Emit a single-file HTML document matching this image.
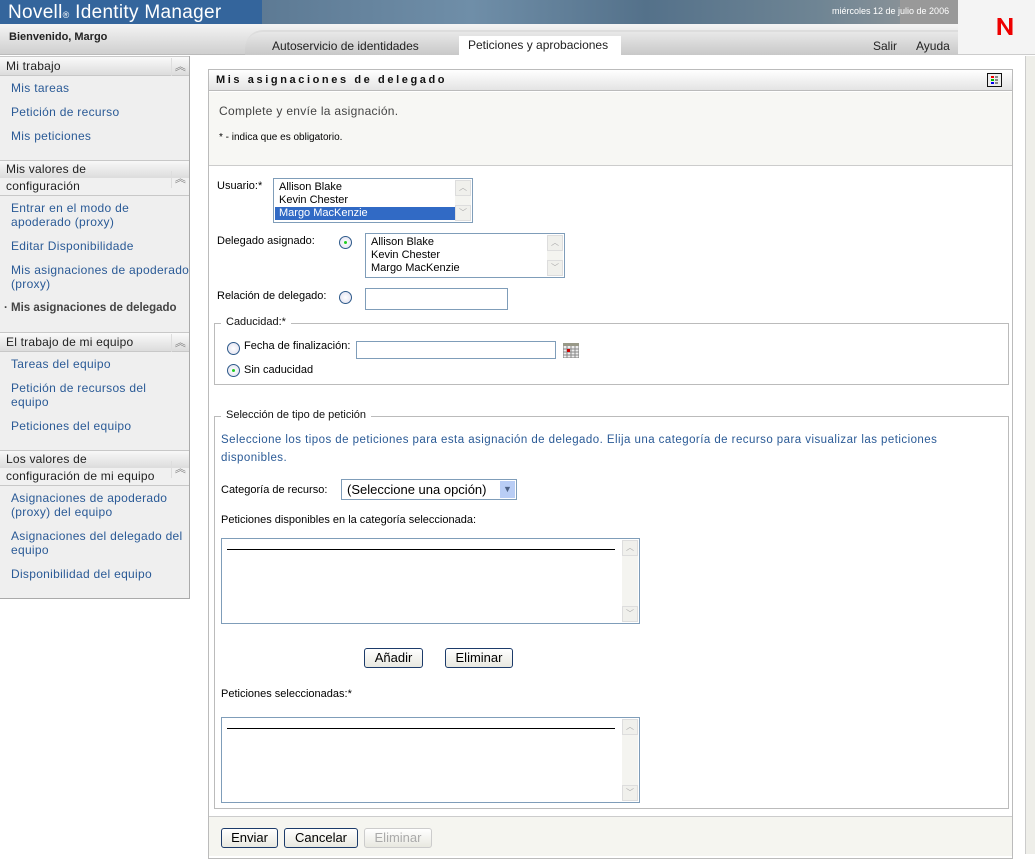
<!DOCTYPE html>
<html><head><meta charset="utf-8"><style>
*{box-sizing:border-box;margin:0;padding:0}
body{width:1035px;height:854px;position:relative;overflow:hidden;background:#fff;font-family:"Liberation Sans",sans-serif;font-size:12px;color:#000}
.a{position:absolute}
.lnk{color:#2a5a96;font-size:12px;letter-spacing:.3px}
.hdr{background:linear-gradient(#fafafa,#dcdcdc);border-top:1px solid #c8c8c8;border-bottom:1px solid #c8c8c8;color:#222;font-size:12px;padding-left:6px;letter-spacing:.2px}
.chev{position:absolute;right:0;width:18px;color:#777;font-size:11px;text-align:center;border-left:1px solid #ddd}
.box{border:1px solid #7f9db9;background:#fff}
.sb{position:absolute;right:1px;top:1px;bottom:1px;width:16px;background:#f4f4f0}
.sb i{position:absolute;left:0;width:16px;height:16px;border:1px solid #ddd;background:#f0f0ec;font-style:normal;font-size:8px;color:#aaa;text-align:center;line-height:14px}
.radio{width:13px;height:13px;border-radius:50%;border:1px solid #2e5a8a;background:radial-gradient(#fff,#dde);}
.radio.on::after{content:"";position:absolute;left:4px;top:4px;width:3px;height:3px;border-radius:50%;background:#2c2}
.btn{border:1px solid #1c3b6a;border-radius:3px;background:linear-gradient(#fff,#e8e8e0);font-size:13px;text-align:center;line-height:18px;height:20px}
.fs{border:1px solid #bbb}
.leg{background:#fff;padding:0 5px;font-size:11px;color:#111}
</style></head><body>
<div class="a" style="left:0;top:0;width:262px;height:24px;background:#34659c"></div>
<div class="a" style="left:262px;top:0;width:698px;height:24px;background:linear-gradient(90deg,#5d7a94,#6f8ea8 30%,#54718a 55%,#6f8594 80%,#9a9a9a)"></div>
<div class="a" style="left:900px;top:0;width:58px;height:24px;background:#999"></div>
<div class="a" style="left:8px;top:2px;color:#fff;font-size:19px;letter-spacing:.3px">Novell<span style="font-size:9px">®</span> Identity Manager</div>
<div class="a" style="left:832px;top:6px;color:#fff;font-size:9px">miércoles 12 de julio de 2006</div>
<div class="a" style="left:958px;top:0;width:77px;height:55px;background:#f4f4f4;border-bottom:1px solid #ccc"></div>
<svg class="a" style="left:996px;top:17px" width="18" height="19"><path d="M1.5 18V1H5L13 13V1H16.5V18H13L5 6V18Z" fill="#e00"/></svg>
<div class="a" style="left:0;top:24px;width:958px;height:31px;background:linear-gradient(#f4f4f4,#cfcfcf);border-bottom:1px solid #bbb"></div>
<div class="a" style="left:245px;top:30px;width:713px;height:25px;background:linear-gradient(#e8e8e8,#c8c8c8);border-top:2px solid #ddd;border-radius:18px 0 0 0"></div>
<div class="a" style="left:9px;top:31px;font-weight:bold;font-size:11px;color:#222">Bienvenido, Margo</div>
<div class="a" style="left:272px;top:39px;font-size:12px;color:#222">Autoservicio de identidades</div>
<div class="a" style="left:459px;top:36px;width:162px;height:20px;background:#fff"></div>
<div class="a" style="left:468px;top:38px;font-size:12px;color:#222">Peticiones y aprobaciones</div>
<div class="a" style="left:873px;top:39px;font-size:12px;color:#222">Salir</div>
<div class="a" style="left:916px;top:39px;font-size:12px;color:#222">Ayuda</div>
<div class="a" style="left:1025px;top:56px;width:10px;height:798px;background:#eeeee9;border-left:1px solid #ccc"></div>
<div class="a" style="left:0;top:56px;width:190px;height:543px;background:#efefef;border-right:1px solid #aaa;border-bottom:1px solid #aaa"></div>
<div class="a hdr" style="left:0;top:56px;width:189px;height:20px;line-height:18px">Mi trabajo<span class="chev" style="top:1px">︽</span></div>
<div class="a lnk" style="left:11px;top:81px">Mis tareas</div>
<div class="a lnk" style="left:11px;top:105px">Petición de recurso</div>
<div class="a lnk" style="left:11px;top:129px">Mis peticiones</div>
<div class="a hdr" style="left:0;top:160px;width:189px;height:36px;line-height:17px;background:linear-gradient(#f8f8f8,#dcdcdc 50%,#f0f0f0 50%)">Mis valores de<br>configuración<span class="chev" style="top:10px">︽</span></div>
<div class="a lnk" style="left:11px;top:201px;line-height:14px">Entrar en el modo de<br>apoderado (proxy)</div>
<div class="a lnk" style="left:11px;top:239px">Editar Disponibilidade</div>
<div class="a lnk" style="left:11px;top:263px;line-height:14px">Mis asignaciones de apoderado<br>(proxy)</div>
<div class="a" style="left:4px;top:302px;font-weight:bold;color:#444;font-size:11.5px">· Mis asignaciones de delegado</div>
<div class="a hdr" style="left:0;top:332px;width:189px;height:20px;line-height:18px">El trabajo de mi equipo<span class="chev" style="top:1px">︽</span></div>
<div class="a lnk" style="left:11px;top:357px">Tareas del equipo</div>
<div class="a lnk" style="left:11px;top:381px;line-height:14px">Petición de recursos del<br>equipo</div>
<div class="a lnk" style="left:11px;top:419px">Peticiones del equipo</div>
<div class="a hdr" style="left:0;top:450px;width:189px;height:36px;line-height:17px;background:linear-gradient(#f8f8f8,#dcdcdc 50%,#f0f0f0 50%)">Los valores de<br>configuración de mi equipo<span class="chev" style="top:10px">︽</span></div>
<div class="a lnk" style="left:11px;top:491px;line-height:14px">Asignaciones de apoderado<br>(proxy) del equipo</div>
<div class="a lnk" style="left:11px;top:529px;line-height:14px">Asignaciones del delegado del<br>equipo</div>
<div class="a lnk" style="left:11px;top:567px">Disponibilidad del equipo</div>
<div class="a" style="left:208px;top:69px;width:805px;height:790px;border:1px solid #bbb;background:#fff"></div>
<div class="a" style="left:209px;top:70px;width:803px;height:21px;background:linear-gradient(#fff,#e4e4e4);border-bottom:1px solid #bbb"></div>
<div class="a" style="left:216px;top:74px;font-weight:bold;font-size:11px;letter-spacing:2.6px;color:#111">Mis asignaciones de delegado</div>
<div class="a" style="left:987px;top:73px;width:15px;height:14px;border:1px solid #111;background:#eee;font-size:0">
<svg width="13" height="12"><rect x="3" y="2" width="3" height="2" fill="#e00"/><rect x="3" y="5" width="3" height="2" fill="#0b0"/><rect x="3" y="8" width="3" height="2" fill="#00e"/><rect x="7" y="2" width="3" height="2" fill="#888"/><rect x="7" y="5" width="3" height="2" fill="#888"/><rect x="7" y="8" width="3" height="2" fill="#888"/></svg></div>
<div class="a" style="left:209px;top:92px;width:803px;height:74px;background:#f7f7f4;border-bottom:1px solid #ccc"></div>
<div class="a" style="left:219px;top:104px;font-size:12px;color:#444;letter-spacing:.3px">Complete y envíe la asignación.</div>
<div class="a" style="left:219px;top:132px;font-size:10px">* - indica que es obligatorio.</div>
<div class="a" style="left:217px;top:180px;font-size:11px">Usuario:*</div>
<div class="a box" style="left:273px;top:178px;width:200px;height:45px;font-size:11px;line-height:13px;padding:2px 0 0 1px">
<div style="padding-left:4px">Allison Blake</div><div style="padding-left:4px">Kevin Chester</div><div style="padding-left:4px;background:#316ac5;color:#fff;width:180px">Margo MacKenzie</div>
<div class="sb"><i style="top:0">︿</i><i style="bottom:0">﹀</i></div></div>
<div class="a" style="left:217px;top:235px;font-size:11px">Delegado asignado:</div>
<div class="a radio on" style="left:339px;top:236px"></div>
<div class="a box" style="left:365px;top:233px;width:200px;height:45px;font-size:11px;line-height:13px;padding:2px 0 0 5px">Allison Blake<br>Kevin Chester<br>Margo MacKenzie<div class="sb"><i style="top:0">︿</i><i style="bottom:0">﹀</i></div></div>
<div class="a" style="left:217px;top:290px;font-size:11px">Relación de delegado:</div>
<div class="a radio" style="left:339px;top:291px"></div>
<div class="a box" style="left:365px;top:288px;width:143px;height:22px"></div>
<div class="a fs" style="left:214px;top:323px;width:795px;height:62px"></div>
<div class="a leg" style="left:221px;top:316px">Caducidad:*</div>
<div class="a radio" style="left:227px;top:342px"></div>
<div class="a" style="left:244px;top:340px;font-size:11px">Fecha de finalización:</div>
<div class="a box" style="left:356px;top:341px;width:200px;height:18px"></div>
<svg class="a" style="left:563px;top:343px" width="16" height="15"><rect x="0" y="0" width="16" height="15" fill="#eee" stroke="#777"/><rect x="0" y="0" width="16" height="3" fill="#998"/><path d="M0 6H16M0 9H16M0 12H16M4 3V15M8 3V15M12 3V15" stroke="#888"/><rect x="4" y="6" width="3" height="3" fill="#c00"/></svg>
<div class="a radio on" style="left:227px;top:364px"></div>
<div class="a" style="left:244px;top:364px;font-size:11px">Sin caducidad</div>
<div class="a fs" style="left:214px;top:416px;width:795px;height:393px"></div>
<div class="a leg" style="left:221px;top:409px">Selección de tipo de petición</div>
<div class="a" style="left:221px;top:431px;color:#2a5a96;font-size:11.5px;line-height:18px;width:730px;letter-spacing:.45px">Seleccione los tipos de peticiones para esta asignación de delegado. Elija una categoría de recurso para visualizar las peticiones disponibles.</div>
<div class="a" style="left:221px;top:484px;font-size:11px">Categoría de recurso:</div>
<div class="a box" style="left:341px;top:479px;width:176px;height:21px;font-size:13px;line-height:19px;padding-left:5px">(Seleccione una opción)<span style="position:absolute;right:1px;top:1px;width:15px;height:17px;background:#b9cdf5;color:#4d6185;font-size:9px;text-align:center;line-height:17px">▼</span></div>
<div class="a" style="left:221px;top:514px;font-size:11px">Peticiones disponibles en la categoría seleccionada:</div>
<div class="a box" style="left:221px;top:538px;width:419px;height:86px"><div style="position:absolute;left:5px;top:10px;width:388px;border-top:1px solid #000"></div><div class="sb"><i style="top:0">︿</i><i style="bottom:0">﹀</i></div></div>
<div class="a btn" style="left:364px;top:648px;width:59px">Añadir</div>
<div class="a btn" style="left:445px;top:648px;width:68px">Eliminar</div>
<div class="a" style="left:221px;top:688px;font-size:11px">Peticiones seleccionadas:*</div>
<div class="a box" style="left:221px;top:717px;width:419px;height:86px"><div style="position:absolute;left:5px;top:10px;width:388px;border-top:1px solid #000"></div><div class="sb"><i style="top:0">︿</i><i style="bottom:0">﹀</i></div></div>
<div class="a" style="left:209px;top:816px;width:803px;height:40px;background:#f5f5f0;border-top:1px solid #ccc"></div>
<div class="a btn" style="left:221px;top:828px;width:57px">Enviar</div>
<div class="a btn" style="left:284px;top:828px;width:74px">Cancelar</div>
<div class="a btn" style="left:364px;top:828px;width:68px;border-color:#ccc;color:#aaa">Eliminar</div>
</body></html>
